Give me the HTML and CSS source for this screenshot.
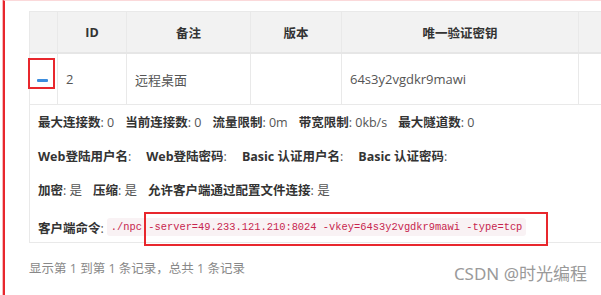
FILE: index.html
```html
<!DOCTYPE html>
<html lang="zh-CN">
<head>
    <meta charset="UTF-8">
    <title>客户端列表</title>
    <link rel="stylesheet" href="styles.css">
</head>
<body>
    <div class="frame">
        <table class="list">
            <colgroup>
                <col class="c-toggle">
                <col class="c-id">
                <col class="c-remark">
                <col class="c-ver">
                <col class="c-key">
                <col class="c-more">
            </colgroup>
            <thead>
                <tr>
                    <th></th>
                    <th>ID</th>
                    <th>备注</th>
                    <th>版本</th>
                    <th>唯一验证密钥</th>
                    <th></th>
                </tr>
            </thead>
            <tbody>
                <tr class="row">
                    <td class="toggle"><span class="minus"></span></td>
                    <td>2</td>
                    <td>远程桌面</td>
                    <td></td>
                    <td>64s3y2vgdkr9mawi</td>
                    <td></td>
                </tr>
                <tr class="detail">
                    <td colspan="5">
                        <div class="info">
                            <div class="line l1">
                                <span><b>最大连接数</b>: 0</span>
                                <span><b>当前连接数</b>: 0</span>
                                <span><b>流量限制</b>: 0m</span>
                                <span><b>带宽限制</b>: 0kb/s</span>
                                <span><b>最大隧道数</b>: 0</span>
                            </div>
                            <div class="line l2 wide">
                                <span><b>Web登陆用户名</b>:</span>
                                <span><b>Web登陆密码</b>:</span>
                                <span><b>Basic 认证用户名</b>:</span>
                                <span><b>Basic 认证密码</b>:</span>
                            </div>
                            <div class="line l3">
                                <span><b>加密</b>: 是</span>
                                <span><b>压缩</b>: 是</span>
                                <span><b>允许客户端通过配置文件连接</b>: 是</span>
                            </div>
                            <div class="line l4">
                                <span><b>客户端命令</b>:</span>
                                <code>./npc -server=49.233.121.210:8024 -vkey=64s3y2vgdkr9mawi -type=tcp</code>
                            </div>
                            <div class="mark mark-cmd"></div>
                        </div>
                    </td>
                    <td class="blank"></td>
                </tr>
            </tbody>
        </table>
        <div class="mark mark-btn"></div>
        <p class="pager">显示第 1 到第 1 条记录，总共 1 条记录</p>
        <div class="watermark">CSDN @时光编程</div>
    </div>
</body>
</html>
```

FILE: styles.css
```css
html, body {
    margin: 0;
    padding: 0;
    background: #fff;
    overflow: hidden;
}

body {
    width: 601px;
    height: 295px;
    font-family: "Open Sans", "Noto Sans CJK SC", sans-serif;
    font-size: 13px;
    color: #555;
}

/* red annotation frame from the screenshot */
.frame {
    position: relative;
    box-sizing: border-box;
    width: 598px;
    height: 295px;
    margin-left: 3px;
    border-top: 1px solid #fbd9da;
    border-left: 2px solid #e8272d;
    box-shadow: -1px 0 0 #f9b9bb;
    padding: 10px 0 0 24px;
    overflow: hidden;
}

.list {
    border-collapse: collapse;
    table-layout: fixed;
    width: 572px;
}

.c-toggle { width: 28px; }
.c-id { width: 69px; }
.c-remark { width: 124px; }
.c-ver { width: 91px; }
.c-key { width: 237px; }
.c-more { width: 23px; }

.list th,
.list td {
    border: 1px solid #e9e9e9;
    padding: 0 8px;
    text-align: left;
    white-space: nowrap;
}

.list tr > :last-child {
    border-right: none;
}

.list thead th {
    height: 40px;
    background: #f2f2f2;
    border-bottom: 2px solid #e6e6e6;
    text-align: center;
    font-weight: bold;
    font-size: 12.5px;
    color: #333;
}

.row td {
    height: 50px;
    color: #555;
}

.toggle {
    text-align: center;
}

.minus {
    display: inline-block;
    width: 11px;
    height: 3px;
    background: #3c8dde;
    border-radius: 1px;
    vertical-align: middle;
    margin-left: -1px;
}

.detail td {
    padding: 0;
    vertical-align: top;
    border-right: none;
}

.detail .blank {
    border-left: none;
}

.info {
    position: relative;
    padding: 0 8px;
    height: 137px;
}

.line {
    display: flex;
    align-items: center;
    gap: 11px;
    font-size: 12.5px;
    color: #555;
}

.line b {
    color: #333;
}

.line.wide {
    gap: 15px;
}

.l1 { height: 33px; }
.l2 { height: 35px; }
.l3 { height: 33px; }
.l4 {
    height: 36px;
    padding-top: 6px;
    box-sizing: border-box;
    gap: 3px;
}

code {
    font-family: "Liberation Mono", monospace;
    font-size: 10.4px;
    color: #c7254e;
    background: #f9f2f4;
    padding: 3px 4px;
    border-radius: 3px;
}

.mark {
    position: absolute;
    border: 2px solid #e8272d;
}

.mark-cmd {
    left: 114px;
    top: 107px;
    width: 400px;
    height: 30px;
}

.mark-btn {
    left: 23px;
    top: 57px;
    width: 23px;
    height: 27px;
}

.pager {
    margin: 15px 0 0;
    color: #888;
    font-size: 12.5px;
}

.watermark {
    position: absolute;
    right: 14px;
    bottom: 10px;
    font-family: "Noto Sans", "Noto Sans CJK SC", sans-serif;
    font-size: 17px;
    color: #9a9a9a;
}
```
